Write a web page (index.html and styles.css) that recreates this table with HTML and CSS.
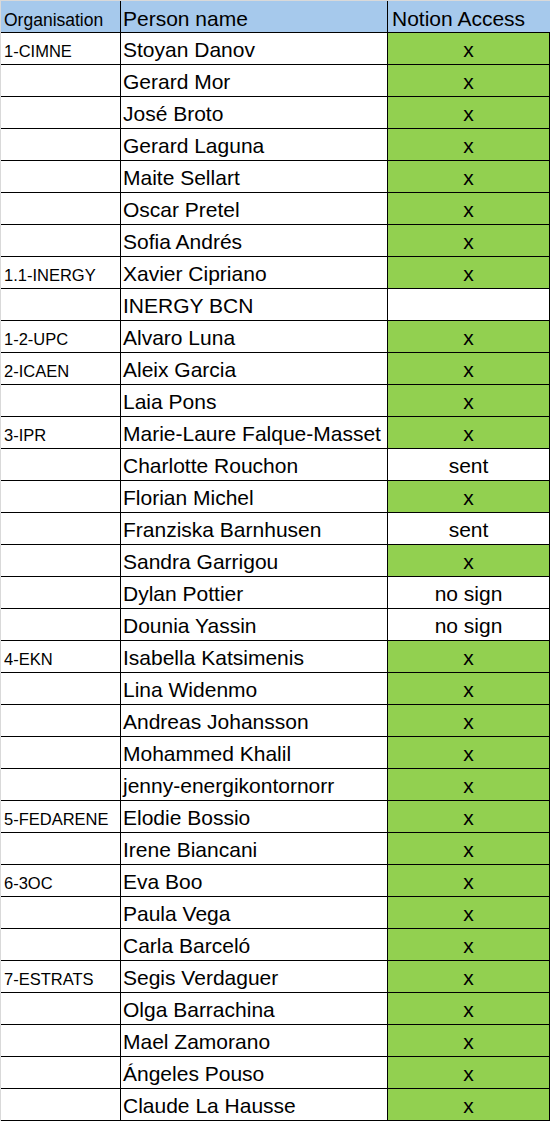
FILE: index.html
```html
<!DOCTYPE html>
<html>
<head>
<meta charset="utf-8">
<link rel="stylesheet" href="styles.css">
</head>
<body>
<div class="sheet">
  <div class="c org hd">Organisation</div>
  <div class="c name hd">Person name</div>
  <div class="c acc hd">Notion Access</div>

  <div class="c org">1-CIMNE</div><div class="c name">Stoyan Danov</div><div class="c acc ok">x</div>
  <div class="c org"></div><div class="c name">Gerard Mor</div><div class="c acc ok">x</div>
  <div class="c org"></div><div class="c name">José Broto</div><div class="c acc ok">x</div>
  <div class="c org"></div><div class="c name">Gerard Laguna</div><div class="c acc ok">x</div>
  <div class="c org"></div><div class="c name">Maite Sellart</div><div class="c acc ok">x</div>
  <div class="c org"></div><div class="c name">Oscar Pretel</div><div class="c acc ok">x</div>
  <div class="c org"></div><div class="c name">Sofia Andrés</div><div class="c acc ok">x</div>
  <div class="c org">1.1-INERGY</div><div class="c name">Xavier Cipriano</div><div class="c acc ok">x</div>
  <div class="c org"></div><div class="c name">INERGY BCN</div><div class="c acc"></div>
  <div class="c org">1-2-UPC</div><div class="c name">Alvaro Luna</div><div class="c acc ok">x</div>
  <div class="c org">2-ICAEN</div><div class="c name">Aleix Garcia</div><div class="c acc ok">x</div>
  <div class="c org"></div><div class="c name">Laia Pons</div><div class="c acc ok">x</div>
  <div class="c org">3-IPR</div><div class="c name">Marie-Laure Falque-Masset</div><div class="c acc ok">x</div>
  <div class="c org"></div><div class="c name">Charlotte Rouchon</div><div class="c acc">sent</div>
  <div class="c org"></div><div class="c name">Florian Michel</div><div class="c acc ok">x</div>
  <div class="c org"></div><div class="c name">Franziska Barnhusen</div><div class="c acc">sent</div>
  <div class="c org"></div><div class="c name">Sandra Garrigou</div><div class="c acc ok">x</div>
  <div class="c org"></div><div class="c name">Dylan Pottier</div><div class="c acc">no sign</div>
  <div class="c org"></div><div class="c name">Dounia Yassin</div><div class="c acc">no sign</div>
  <div class="c org">4-EKN</div><div class="c name">Isabella Katsimenis</div><div class="c acc ok">x</div>
  <div class="c org"></div><div class="c name">Lina Widenmo</div><div class="c acc ok">x</div>
  <div class="c org"></div><div class="c name">Andreas Johansson</div><div class="c acc ok">x</div>
  <div class="c org"></div><div class="c name">Mohammed Khalil</div><div class="c acc ok">x</div>
  <div class="c org"></div><div class="c name">jenny-energikontornorr</div><div class="c acc ok">x</div>
  <div class="c org">5-FEDARENE</div><div class="c name">Elodie Bossio</div><div class="c acc ok">x</div>
  <div class="c org"></div><div class="c name">Irene Biancani</div><div class="c acc ok">x</div>
  <div class="c org">6-3OC</div><div class="c name">Eva Boo</div><div class="c acc ok">x</div>
  <div class="c org"></div><div class="c name">Paula Vega</div><div class="c acc ok">x</div>
  <div class="c org"></div><div class="c name">Carla Barceló</div><div class="c acc ok">x</div>
  <div class="c org">7-ESTRATS</div><div class="c name">Segis Verdaguer</div><div class="c acc ok">x</div>
  <div class="c org"></div><div class="c name">Olga Barrachina</div><div class="c acc ok">x</div>
  <div class="c org"></div><div class="c name">Mael Zamorano</div><div class="c acc ok">x</div>
  <div class="c org"></div><div class="c name">Ángeles Pouso</div><div class="c acc ok">x</div>
  <div class="c org"></div><div class="c name">Claude La Hausse</div><div class="c acc ok">x</div>
</div>
</body>
</html>
```

FILE: styles.css
```css
html, body {
  margin: 0;
  padding: 0;
}
body {
  background: #d9d9d9;
  width: 550px;
  height: 1121px;
  overflow: hidden;
  font-family: "Liberation Sans", Arial, sans-serif;
  color: #000;
}
.sheet {
  margin: 1px 0 0 1px;
  display: grid;
  grid-template-columns: 120px 267px 162px;
  grid-auto-rows: 32px;
  background: #fff;
}
.c {
  box-sizing: border-box;
  border-right: 1px solid #000;
  border-bottom: 1px solid #000;
  white-space: nowrap;
  overflow: hidden;
  font-size: 21px;
  line-height: 29px;
  padding-top: 2px;
}
.org {
  font-size: 16.5px;
  line-height: 28px;
  padding-top: 4px;
  padding-left: 3px;
}
.name {
  padding-left: 2px;
}
.acc {
  text-align: center;
}
.ok {
  background: #92d050;
}
.hd {
  background: #a6c9ec;
  line-height: 28px;
  padding-top: 4px;
}
.org.hd {
  font-size: 17.5px;
  line-height: 27px;
  padding-top: 6px;
}
.acc.hd {
  text-align: left;
  padding-left: 4px;
  border-right: none;
}
```
